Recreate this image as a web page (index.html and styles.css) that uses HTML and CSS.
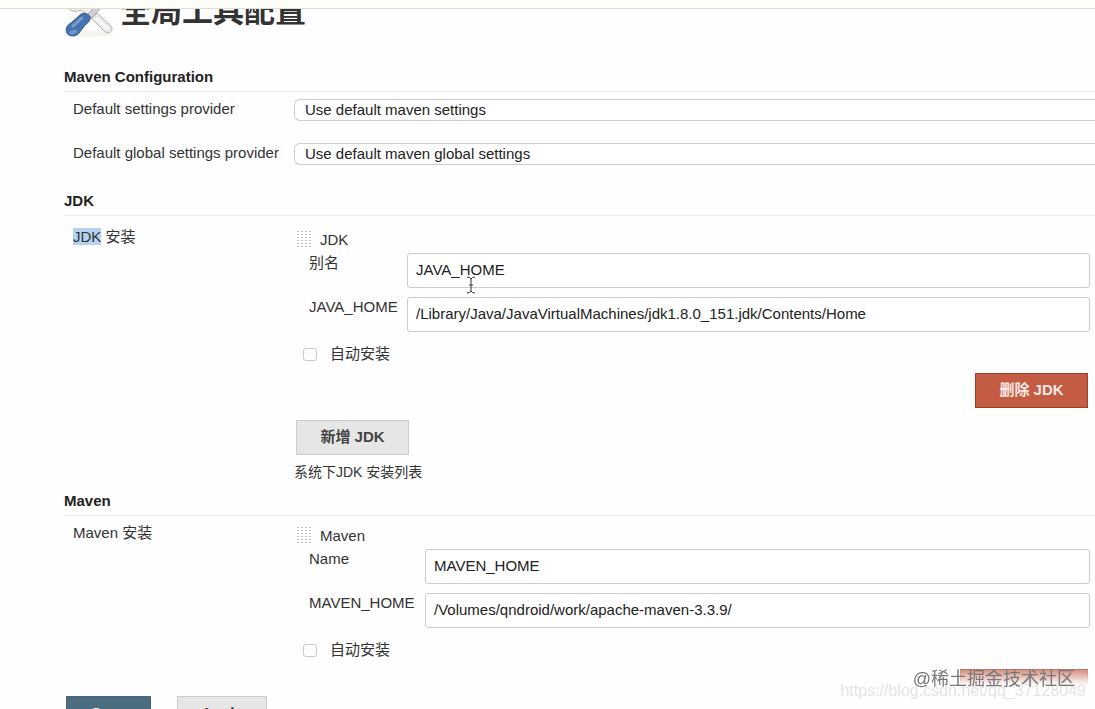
FILE: index.html
```html
<!DOCTYPE html>
<html lang="zh-CN">

<head>
    <meta charset="UTF-8">
    <meta name="viewport" content="width=device-width, initial-scale=1.0">
    <title>全局工具配置</title>
    <link rel="stylesheet" href="styles.css">
</head>

<body>
    <div class="topbar"></div>

    <form class="page">
        <h1 class="title">
            <svg class="tools" viewBox="0 0 50 40" aria-hidden="true">
                <ellipse cx="24" cy="34" rx="24" ry="3" fill="#f3f3f0" />
                <path d="M2 4 C4 11 10 13 17 10 L27 18 L33 13 L22 2 Z" fill="#eeeeec" stroke="#b9b9b6" />
                <path d="M27 18 L33 13 L47 26 C50 30 46 35 41 32 Z" fill="#e9e9e6" stroke="#b4b4b0" />
                <path d="M33 19 L43 28" stroke="#fafafa" stroke-width="3" stroke-linecap="round" />
                <path d="M24 14 L38 0 L43 1 L28 18 Z" fill="#cfd1d4" stroke="#a3a5a9" />
                <path d="M16 15 C19 12 24 13 26 17 C27 20 24 23 21 25 L15 33 C12 37 5 37 3 33 C1 29 3 25 7 23 Z" fill="#4672ae" stroke="#30578f" />
                <path d="M18 18 L9 26" stroke="#7a9dcd" stroke-width="3" stroke-linecap="round" />
                <ellipse cx="9" cy="32" rx="4" ry="2" fill="#6f96ca" transform="rotate(-20 9 32)" />
            </svg>
            全局工具配置
        </h1>

        <section>
            <h2>Maven Configuration</h2>
            <div class="row">
                <label for="settings">Default settings provider</label>
                <select id="settings">
                    <option>Use default maven settings</option>
                </select>
            </div>
            <div class="row">
                <label for="global">Default global settings provider</label>
                <select id="global">
                    <option>Use default maven global settings</option>
                </select>
            </div>
        </section>

        <section>
            <h2>JDK</h2>
            <div class="row install">
                <div class="name"><mark>JDK</mark> 安装</div>
                <div class="tool">
                    <div class="head"><span class="grip"></span>JDK</div>
                    <div class="fields">
                        <label for="jdkName">别名</label>
                        <div class="field">
                            <input type="text" id="jdkName" value="JAVA_HOME">
                            <svg class="caret" viewBox="0 0 10 18" aria-hidden="true">
                                <path d="M1 1 Q4 1 5 3 Q6 1 9 1 M5 3 V15 M1 17 Q4 17 5 15 Q6 17 9 17 M3 9 H7" fill="none" stroke="#333" />
                            </svg>
                        </div>
                        <label for="jdkHome">JAVA_HOME</label>
                        <input type="text" id="jdkHome" value="/Library/Java/JavaVirtualMachines/jdk1.8.0_151.jdk/Contents/Home">
                    </div>
                    <label class="check"><input type="checkbox">自动安装</label>
                    <button type="button" class="btn danger">删除 JDK</button>
                    <button type="button" class="btn add">新增 JDK</button>
                    <p class="desc">系统下JDK 安装列表</p>
                </div>
            </div>
        </section>

        <section>
            <h2>Maven</h2>
            <div class="row install maven">
                <div class="name">Maven 安装</div>
                <div class="tool">
                    <div class="head"><span class="grip"></span>Maven</div>
                    <div class="fields">
                        <label for="mvnName">Name</label>
                        <input type="text" id="mvnName" value="MAVEN_HOME">
                        <label for="mvnHome">MAVEN_HOME</label>
                        <input type="text" id="mvnHome" value="/Volumes/qndroid/work/apache-maven-3.3.9/">
                    </div>
                    <label class="check"><input type="checkbox">自动安装</label>
                    <button type="button" class="btn danger wide" aria-label="删除 Maven"></button>
                </div>
            </div>
        </section>

        <div class="bottom">
            <button type="button" class="btn save">Save</button>
            <button type="button" class="btn apply">Apply</button>
        </div>
    </form>

    <div class="url">https://blog.csdn.net/qq_37128049</div>
    <div class="sign">@稀土掘金技术社区</div>
</body>

</html>
```

FILE: styles.css
```css
* {
    margin: 0;
    padding: 0;
    box-sizing: border-box;
}

body {
    height: 100vh;
    overflow: hidden;
    background: #fefefe;
    color: #333;
    font: 15px/20px "Liberation Sans", "Noto Sans CJK SC", sans-serif;
}

input,
select,
button {
    font: inherit;
    color: #222;
}

.topbar {
    position: fixed;
    top: 0;
    left: 0;
    right: 0;
    height: 9px;
    background: #fefef8;
    border-bottom: 1px solid #deded4;
    z-index: 2;
}

.page {
    padding-left: 64px;
}

.title {
    display: flex;
    align-items: flex-start;
    gap: 6px;
    height: 67px;
    font-size: 31px;
    line-height: 24px;
}

.tools {
    width: 50px;
    height: 40px;
}

h2 {
    height: 25px;
    border-bottom: 1px solid #ececec;
    font-size: 15px;
    line-height: 20px;
    color: #222;
}

.row {
    display: grid;
    grid-template-columns: 230px 1fr;
    height: 44px;
    padding-top: 7px;
}

.row > label,
.name {
    padding-left: 9px;
    white-space: nowrap;
}

select {
    appearance: none;
    height: 22px;
    padding-left: 10px;
    border: 1px solid #ccc;
    border-right: 0;
    border-radius: 6px 0 0 6px;
    background: #fff;
}

section {
    margin-bottom: 11px;
}

.install {
    height: auto;
    padding-top: 11px;
}

.maven {
    padding-top: 7px;
}

.tool {
    display: flex;
    flex-direction: column;
    align-items: flex-start;
}

mark {
    background: #b5d2f3;
    color: inherit;
}

.head {
    display: flex;
    align-items: center;
    gap: 9px;
    height: 26px;
    padding-left: 3px;
}

.grip {
    width: 14px;
    height: 18px;
    background: linear-gradient(to right, transparent 2px, #fefefe 2px) 0 0 / 4px 3px,
        linear-gradient(#bbb 1px, transparent 1px) 0 0 / 4px 3px;
}

.fields {
    display: grid;
    grid-template-columns: 92px 1fr;
    gap: 9px 6px;
    align-self: stretch;
    padding: 0 5px 0 15px;
}

.maven .fields {
    grid-template-columns: 110px 1fr;
}

.field {
    position: relative;
}

input[type=text] {
    width: 100%;
    height: 35px;
    padding: 0 8px 2px;
    border: 1px solid #ccc;
    border-radius: 3px;
    background: #fff;
}

.caret {
    position: absolute;
    left: 59px;
    top: 23px;
    width: 10px;
    height: 18px;
}

.check {
    display: flex;
    align-items: center;
    gap: 13px;
    height: 41px;
    padding: 3px 0 0 9px;
}

.check input {
    appearance: none;
    width: 14px;
    height: 13px;
    border: 1px solid #ccc;
    border-radius: 3px;
    background: #fff;
}

.btn {
    height: 35px;
    min-width: 113px;
    padding-bottom: 2px;
    border: 1px solid #ccc;
    background: #e6e6e6;
    color: #444;
    font-weight: bold;
}

.danger {
    align-self: flex-end;
    margin-right: 7px;
    border-color: #9b402b;
    background: #c45c44;
    color: #fbeae4;
}

.wide {
    width: 128px;
}

.add {
    margin: 12px 0 9px 2px;
}

.desc {
    font-size: 14px;
    line-height: 16px;
}

.bottom {
    position: fixed;
    left: 0;
    right: 0;
    bottom: 0;
    display: flex;
    gap: 26px;
    height: 44px;
    padding: 31px 0 0 66px;
    overflow: hidden;
    background: linear-gradient(rgba(254, 254, 254, 0.1), #fefefe 20px);
}

.save {
    min-width: 85px;
    border-color: #44657a;
    background: #4b6d80;
    color: #fff;
}

.apply {
    min-width: 90px;
}

.sign,
.url {
    position: fixed;
    white-space: nowrap;
}

.sign {
    right: 20px;
    bottom: 18px;
    font-size: 18px;
    line-height: 24px;
    color: #777;
}

.url {
    right: 9px;
    bottom: 8px;
    font-size: 16px;
    color: #e4e4e4;
}
```
